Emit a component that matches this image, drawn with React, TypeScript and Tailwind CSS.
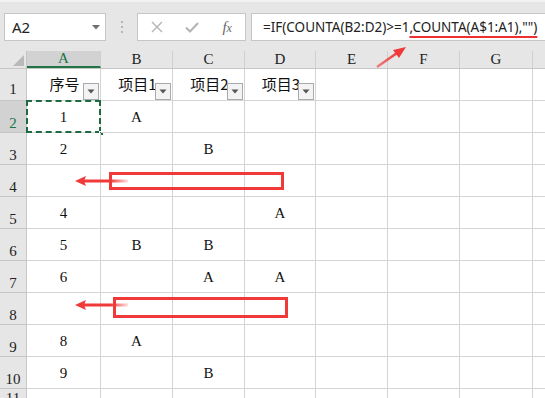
import React from "react";

const colDefs = [
  { k: "A", w: "w-[74px]" },
  { k: "B", w: "w-[72px]" },
  { k: "C", w: "w-[72px]" },
  { k: "D", w: "w-[71px]" },
  { k: "E", w: "w-[72px]" },
  { k: "F", w: "w-[72px]" },
  { k: "G", w: "w-[73px]" },
];

const data: Record<number, string[]> = {
  2: ["1", "A", "", ""],
  3: ["2", "", "B", ""],
  4: ["", "", "", ""],
  5: ["4", "", "", "A"],
  6: ["5", "B", "B", ""],
  7: ["6", "", "A", "A"],
  8: ["", "", "", ""],
  9: ["8", "A", "", ""],
  10: ["9", "", "B", ""],
  11: ["", "", "", ""],
};

const serif = { fontFamily: '"Liberation Serif", "DejaVu Serif", serif' };
const cjk = { fontFamily: '"Noto Sans CJK SC", "Noto Sans", sans-serif' };
const sans = { fontFamily: '"Liberation Sans", Arial, sans-serif' };

function FilterBtn() {
  return (
    <div className="absolute right-[1px] bottom-0 w-[16px] h-[17px] border border-[#a7abb0] bg-[#f3f3f3] flex items-center justify-center">
      <svg width="8" height="5" viewBox="0 0 8 5">
        <path d="M0.5 0.5 L7.5 0.5 L4 4.5 Z" fill="#555" />
      </svg>
    </div>
  );
}

export default function App() {
  const rows = [2, 3, 4, 5, 6, 7, 8, 9, 10, 11];
  const headers = ["序号", "项目1", "项目2", "项目3"];
  return (
    <div className="relative w-[545px] h-[398px] overflow-hidden bg-white" style={sans}>
      {/* toolbar */}
      <div className="h-[51px] bg-[#e6e6e6] flex items-start pt-[13px] pl-[4px] border-t-[2px] border-[#f2f2f2]">
        <div className="w-[102px] h-[28px] bg-white border border-[#c6c6c6] flex items-center justify-between pl-[7px] pr-[5px] -mt-[2px]">
          <span className="text-[15px] text-[#222]" style={{ fontFamily: '"Noto Sans", "Liberation Sans", sans-serif' }}>A2</span>
          <svg width="8" height="5" viewBox="0 0 8 5">
            <path d="M0 0 L8 0 L4 4.5 Z" fill="#707070" />
          </svg>
        </div>
        <div className="w-[31px] h-[28px] -mt-[2px] flex flex-col items-center justify-center gap-[3px]">
          <div className="w-[2px] h-[2px] bg-[#b5b5b5]" />
          <div className="w-[2px] h-[2px] bg-[#b5b5b5]" />
          <div className="w-[2px] h-[2px] bg-[#b5b5b5]" />
        </div>
        <div className="w-[109px] h-[28px] -mt-[2px] bg-white border border-[#c6c6c6] flex items-center">
          <div className="w-[36px] flex justify-center pl-[2px]">
            <svg width="12" height="12" viewBox="0 0 12 12">
              <path d="M1 1 L11 11 M11 1 L1 11" stroke="#b4b4b4" strokeWidth="1.4" />
            </svg>
          </div>
          <div className="w-[36px] flex justify-center">
            <svg width="14" height="11" viewBox="0 0 14 11">
              <path d="M1 5.5 L5 9.5 L13 1" stroke="#b4b4b4" strokeWidth="2" fill="none" />
            </svg>
          </div>
          <div className="w-[36px] flex justify-center">
            <span className="italic text-[15px] text-[#666]" style={{ fontFamily: '"Liberation Serif", serif' }}>
              f<span className="text-[12px]">x</span>
            </span>
          </div>
        </div>
        <div className="flex-1 h-[28px] -mt-[2px] ml-[5px] bg-white border border-[#c6c6c6] border-r-0 flex items-center pl-[11px] whitespace-nowrap">
          <span className="text-[13.5px] text-[#222]" style={{ fontFamily: '"Noto Sans", "Liberation Sans", sans-serif' }}>
            =IF(COUNTA(B2:D2)&gt;=1
            <span className="underline decoration-[#ef3030] decoration-[2px] underline-offset-[4px]">,COUNTA(A$1:A1),"")</span>
          </span>
        </div>
      </div>

      {/* column header */}
      <div className="flex h-[18px] bg-[#e6e6e6] border-b border-[#c6c6c6]">
        <div className="w-[27px] h-full border-r border-[#c6c6c6] relative">
          <svg className="absolute left-[13px] top-[4px]" width="11" height="11" viewBox="0 0 11 11">
            <path d="M11 0 L11 11 L0 11 Z" fill="#b9b9b9" />
          </svg>
        </div>
        {colDefs.map((c) => (
          <div
            key={c.k}
            className={`${c.w} h-full border-r border-[#d0d0d0] flex items-center justify-center text-[15px] ${c.k === "A" ? "bg-[#d2d2d2] text-[#217346] border-b-[2px] border-b-[#217346]" : "text-[#222]"}`}
            style={serif}
          >
            {c.k}
          </div>
        ))}
        <div className="flex-1" />
      </div>

      {/* row 1 */}
      <div className="flex h-[32px]">
        <div className="w-[27px] h-full bg-[#e6e6e6] border-r border-b border-[#c6c6c6] flex items-end justify-center text-[15px] text-[#222]" style={serif}>
          1
        </div>
        {colDefs.map((c, i) => (
          <div key={c.k} className={`${c.w} h-full border-r border-b border-[#d4d4d4] relative flex items-center justify-center`}>
            {i < 4 && (
              <>
                <span className="text-[15px] text-[#111] pl-[2px]" style={cjk}>
                  {headers[i]}
                </span>
                <FilterBtn />
              </>
            )}
          </div>
        ))}
        <div className="flex-1 border-b border-[#d4d4d4]" />
      </div>

      {rows.map((r) => (
        <div key={r} className="flex h-[32px]">
          <div
            className={`w-[27px] h-full border-r border-b border-[#c6c6c6] flex ${r === 11 ? "items-start" : "items-end"} justify-center text-[15px] leading-[18px] ${r === 2 ? "bg-[#d2d2d2] text-[#217346]" : "bg-[#e6e6e6] text-[#222]"}`}
            style={serif}
          >
            {r}
          </div>
          {colDefs.map((c, i) => (
            <div
              key={c.k}
              className={`${c.w} h-full border-r border-b border-[#d4d4d4] relative flex items-center justify-center pt-[2px] text-[15px] text-[#111]`}
              style={serif}
            >
              {i < 4 ? data[r][i] : ""}
              {r === 2 && i === 0 && (
                <>
                  <div className="absolute -left-[1px] -top-[1px] w-[75px] h-[33px] border-[2px] border-dashed border-[#1e6b41]" />
                  <div className="absolute -right-[4px] -bottom-[4px] w-[5px] h-[5px] bg-[#1e6b41] border border-white" />
                </>
              )}
            </div>
          ))}
          <div className="flex-1 border-b border-[#d4d4d4]" />
        </div>
      ))}

      {/* annotations */}
      <div className="absolute left-[109px] top-[172px] w-[175px] h-[18px] border-[3px] border-[#f03a3a]" />
      <div className="absolute left-[113px] top-[297px] w-[175px] h-[21px] border-[3px] border-[#f03a3a]" />
      <svg className="absolute left-0 top-0 pointer-events-none" width="545" height="398" viewBox="0 0 545 398">
        <defs>
          <linearGradient id="fadeL" x1="0" y1="0" x2="1" y2="0">
            <stop offset="0" stopColor="#f03a3a" />
            <stop offset="0.6" stopColor="#f03a3a" />
            <stop offset="1" stopColor="#f03a3a" stopOpacity="0.15" />
          </linearGradient>
          <linearGradient id="fadeU" x1="1" y1="0" x2="0" y2="1">
            <stop offset="0" stopColor="#f03a3a" />
            <stop offset="1" stopColor="#f03a3a" stopOpacity="0.6" />
          </linearGradient>
        </defs>
        <rect x="84" y="179.5" width="44" height="3" fill="url(#fadeL)" />
        <path d="M75 181 L86 176 L84 181 L86 186 Z" fill="#f03a3a" />
        <rect x="84" y="303.5" width="44" height="3" fill="url(#fadeL)" />
        <path d="M75 305 L86 300 L84 305 L86 310 Z" fill="#f03a3a" />
        <path d="M377 67 L397 53" stroke="url(#fadeU)" strokeWidth="2.5" />
        <path d="M406 47 L393 50 L396 54 L399 58 Z" fill="#f03a3a" />
      </svg>
    </div>
  );
}
